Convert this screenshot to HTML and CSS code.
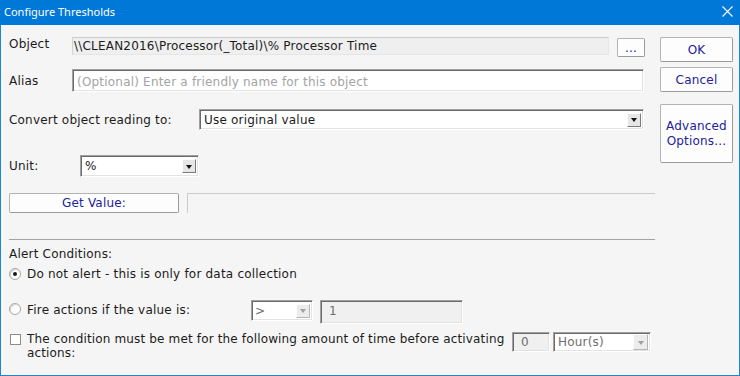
FILE: index.html
```html
<!DOCTYPE html>
<html>
<head>
<meta charset="utf-8">
<link rel="stylesheet" href="styles.css">
</head>
<body>
<div class="window">
  <div class="titlebar">
    <span class="title">Configure Thresholds</span>
    <svg class="close" width="11" height="11" viewBox="0 0 11 11"><path d="M0.5 0.5 L10.5 10.5 M10.5 0.5 L0.5 10.5" stroke="#fff" stroke-width="1.1" fill="none"/></svg>
  </div>
  <div class="client">
    <div class="main">
      <div class="row row-object">
        <span class="lbl lbl-short">Object</span>
        <div class="field readonly obj-field">\\CLEAN2016\Processor(_Total)\% Processor Time</div>
        <button class="btn btn-dots">...</button>
      </div>
      <div class="row row-alias">
        <span class="lbl lbl-short">Alias</span>
        <div class="field sunken alias-field placeholder">(Optional) Enter a friendly name for this object</div>
      </div>
      <div class="row row-convert">
        <span class="lbl lbl-convert">Convert object reading to:</span>
        <div class="select sunken convert-select"><span class="sel-text">Use original value</span><span class="arrow"><i></i></span></div>
      </div>
      <div class="row row-unit">
        <span class="lbl lbl-unit">Unit:</span>
        <div class="select sunken unit-select"><span class="sel-text">%</span><span class="arrow"><i></i></span></div>
      </div>
      <div class="row row-get">
        <button class="btn btn-get">Get Value:</button>
        <div class="field flat get-field"></div>
      </div>
      <div class="sep"></div>
      <div class="section-title">Alert Conditions:</div>
      <div class="opt opt-1"><span class="radio checked"></span><span>Do not alert - this is only for data collection</span></div>
      <div class="opt opt-2">
        <span class="radio"></span><span class="opt-text fire-text">Fire actions if the value is:</span>
        <div class="select sunken disabled op-select"><span class="sel-text">&gt;</span><span class="arrow"><i></i></span></div>
        <div class="field sunken dis-field val-field">1</div>
      </div>
      <div class="opt opt-3">
        <span class="check"></span><span class="opt-text cond-text">The condition must be met for the following amount of time before activating<br>actions:</span>
        <div class="field sunken dis-field time-field">0</div>
        <div class="select sunken disabled unit2-select"><span class="sel-text">Hour(s)</span><span class="arrow"><i></i></span></div>
      </div>
    </div>
    <div class="side">
      <button class="btn btn-side btn-ok">OK</button>
      <button class="btn btn-side btn-cancel">Cancel</button>
      <button class="btn btn-side btn-adv">Advanced<br>Options...</button>
    </div>
  </div>
</div>
</body>
</html>
```
FILE: styles.css
```css
* { box-sizing: border-box; }
html, body { margin: 0; padding: 0; }
body { width: 740px; height: 376px; overflow: hidden; background: #f5f5f5; }

.window {
  width: 740px; height: 376px;
  border: 1px solid #1c84d9; border-top: 0;
  background: #f5f5f5;
  font-family: "DejaVu Sans", Verdana, sans-serif;
  font-size: 12px; color: #1b1b1b; letter-spacing: 0.2px;
}

.titlebar {
  height: 25px; background: #0078d7; color: #fff;
  display: flex; align-items: center; justify-content: space-between;
  padding: 0 7px 2px 4px;
  margin: 0 -1px;
  letter-spacing: 0;
}
.title { font-family: "Noto Sans", "Open Sans", sans-serif; font-size: 11px; }
.close { display: block; }

.client { display: flex; padding: 0 6px 0 8px; }
.main { width: 647px; display: flex; flex-direction: column; }
.side { margin-left: 4px; padding-top: 12px; display: flex; flex-direction: column; width: 73px; }

.row { display: flex; align-items: center; }
.lbl { line-height: 14px; }
.lbl-short { width: 63px; }
.lbl-convert { width: 190px; }
.lbl-unit { width: 71px; }

.row-object { margin-top: 12px; height: 20px; align-items: flex-start; }
.row-alias { margin-top: 12px; height: 23px; }
.row-convert { margin-top: 17px; height: 21px; }
.row-unit { margin-top: 25px; height: 22px; }
.row-get { margin-top: 16px; height: 21px; align-items: flex-start; }

.field { height: 100%; line-height: 16px; white-space: nowrap; overflow: hidden; }
.readonly {
  background: #efefef; border: 1px solid #e6e6e6; border-top-color: #cacaca; border-left-color: #d4d4d4;
  padding-left: 1px; height: 18px;
}
.obj-field { width: 537px; }
.btn-dots {
  margin-left: 8px; margin-top: 1px; width: 28px; height: 19px;
  font-size: 10px; line-height: 12px; padding: 0 0 3px; letter-spacing: 0;
}

.sunken {
  background: #fff;
  border: 1px solid; border-color: #a0a0a0 #ffffff #ffffff #a0a0a0;
  box-shadow: inset 1px 1px 0 #6b6b6b, inset -1px -1px 0 #e3e3e3;
}
.alias-field { width: 572px; padding: 3px 0 0 4px; line-height: 18px; }
.placeholder { color: #a3a3a3; }

.select { display: flex; align-items: center; height: 100%; position: relative; }
.sel-text { flex: 1; padding-left: 4px; line-height: 16px; white-space: nowrap; }
.arrow {
  width: 14px; height: 14px; margin-right: 2px;
  background: #e6e6e6; border: 1px solid; border-color: #fdfdfd #7a7a7a #7a7a7a #fdfdfd;
  display: flex; align-items: center; justify-content: center;
}
.arrow i { display: block; width: 0; height: 0; border-left: 3.5px solid transparent; border-right: 3.5px solid transparent; border-top: 4px solid #111; margin-top: 1px; }
.convert-select { width: 445px; }
.unit-select { width: 119px; }

.btn {
  font-family: "DejaVu Sans", Verdana, sans-serif; font-size: 12px; color: #22229a; letter-spacing: 0.2px;
  background: #fdfdfd; border: 1px solid #b3b3b3; border-right-color: #9a9a9a; border-bottom-color: #9a9a9a;
  border-radius: 2px; padding: 0; cursor: default;
}
.btn-get { width: 170px; height: 20px; margin-left: 0; line-height: 16px; }
.flat { background: transparent; border-top: 1px solid #cbcbcb; border-left: 1px solid #cbcbcb; }
.get-field { margin-left: 8px; width: 468px; height: 20px; }

.sep { margin-top: 25px; height: 1px; width: 646px; background: #a3a3a3; }
.section-title { margin-top: 7px; line-height: 14px; }

.opt { display: flex; align-items: center; }
.opt-1 { margin-top: 6px; height: 14px; }
.opt-2 { margin-top: 19px; height: 24px; align-items: flex-start; }
.opt-2 .radio { margin-top: 3px; }
.opt-2 .fire-text { margin-top: 3px; width: 224px; }
.opt-3 { margin-top: 8px; align-items: flex-start; }

.radio {
  width: 12px; height: 12px; border-radius: 50%; margin-left: 0; margin-right: 6px; flex: none;
  border: 1px solid #a8a8a8; background: #fff; position: relative;
  box-shadow: inset 1px 1px 1px #d0d0d0;
}
.radio.checked::after {
  content: ""; position: absolute; left: 3px; top: 3px; width: 4px; height: 4px; border-radius: 50%; background: #1a1a1a;
}
.check { width: 11px; height: 11px; border: 1px solid #8c8c8c; background: #fff; margin: 2px 6px 0 1px; flex: none; }

.disabled { color: #6d6d6d; }
.disabled .arrow { border-color: #fdfdfd #b5b5b5 #b5b5b5 #fdfdfd; background: #ececec; }
.disabled .arrow i { border-top-color: #a0a0a0; }
.op-select { width: 62px; height: 21px; }
.op-select .sel-text { padding-left: 3px; }
.dis-field { background: #f0f0f0; color: #6d6d6d; line-height: 18px; padding-left: 8px; }
.val-field { width: 143px; height: 24px; margin-left: 7px; line-height: 20px; }

.cond-text { width: 485px; line-height: 14px; margin-top: 0; white-space: nowrap; letter-spacing: 0.15px; }
.time-field { width: 38px; height: 20px; margin-left: 0; }
.unit2-select { width: 98px; height: 20px; margin-left: 3px; }
.unit2-select .arrow { width: 15px; height: 16px; }

.btn-side { width: 73px; }
.btn-ok { height: 25px; }
.btn-cancel { height: 25px; margin-top: 5px; }
.btn-adv { height: 59px; margin-top: 12px; line-height: 15px; padding-top: 1px; }
```
